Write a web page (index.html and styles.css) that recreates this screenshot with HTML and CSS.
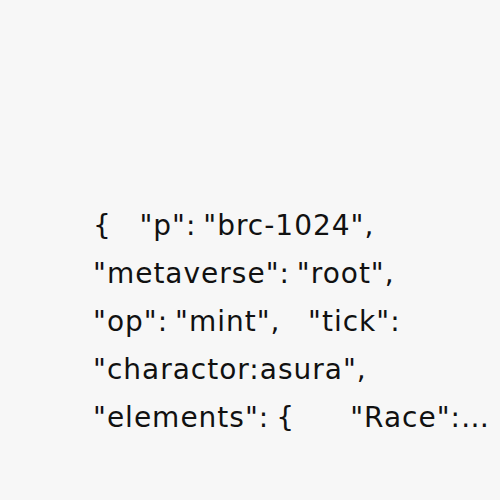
FILE: index.html
```html
<!DOCTYPE html>
<html>
<head>
<meta charset="utf-8">
<link rel="stylesheet" href="styles.css">
</head>
<body>
<main class="page">
  <p class="json">{    "p": "brc-1024",    "metaverse": "root",    "op": "mint",    "tick": "charactor:asura",    "elements": {        "Race": "Asura",        "Gender": "Male",        "Body": "Light",        "Head": "Horn"    }}</p>
</main>
</body>
</html>
```
FILE: styles.css
```css
html, body {
  margin: 0;
  padding: 0;
  background: #f7f7f7;
}
.page {
  width: 500px;
  height: 500px;
  box-sizing: border-box;
  padding: 202px 9px 0 93px;
}
.json {
  margin: 0;
  font-family: "DejaVu Sans", sans-serif;
  font-size: 28px;
  letter-spacing: 1px;
  word-spacing: -3px;
  line-height: 48px;
  color: #111;
  white-space: pre-wrap;
  overflow-wrap: break-word;
  display: -webkit-box;
  -webkit-box-orient: vertical;
  -webkit-line-clamp: 5;
  overflow: hidden;
}
```
